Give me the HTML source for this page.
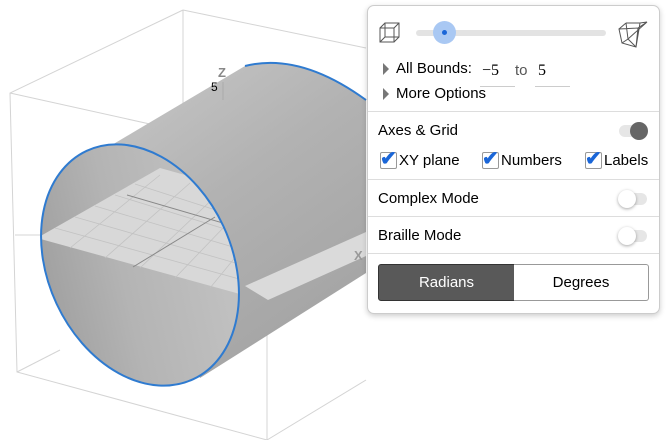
<!DOCTYPE html>
<html><head><style>
body{margin:0;width:666px;height:440px;overflow:hidden;background:#fff;font-family:"Liberation Sans",Arial,sans-serif;position:relative}
.p{position:absolute;left:367px;top:5px;width:291px;height:307px;background:#fff;border:1px solid #ccc;border-radius:7px;box-shadow:0 2px 6px rgba(0,0,0,.2)}
.t{position:absolute;font-size:15px;color:#000;white-space:nowrap}
.hr{position:absolute;left:0;right:0;height:1px;background:#ddd}
.tri{position:absolute;width:0;height:0;border-left:6px solid #777;border-top:6px solid transparent;border-bottom:6px solid transparent}
.tg{position:absolute;width:28px;height:12px;border-radius:6px;background:#e6e6e6}
.kn{position:absolute;top:-3px;width:18px;height:18px;border-radius:50%}
.cb{position:absolute;width:15px;height:15px;border:1px solid #999;border-radius:2px;background:#fff}
</style></head><body>
<svg width="666" height="440" style="position:absolute;left:0;top:0">
<defs>
<linearGradient id="g" x1="0" y1="0" x2="0.6" y2="1"><stop offset="0" stop-color="#c8c8c8"/><stop offset="0.5" stop-color="#b2b2b2"/><stop offset="1" stop-color="#a4a4a4"/></linearGradient>
<linearGradient id="gi" x1="0" y1="0" x2="1" y2="0.3"><stop offset="0" stop-color="#9c9c9c"/><stop offset="0.5" stop-color="#b4b4b4"/><stop offset="1" stop-color="#c0c0c0"/></linearGradient>
<clipPath id="fe"><ellipse cx="140" cy="265" rx="92" ry="126" transform="rotate(-25 140 265)"/></clipPath>
</defs>
<g stroke="#d4d4d4" stroke-width="1" fill="none">
<path d="M183 10 L10 93 L17 372 L267 440 M183 10 L183 110 M183 10 L366 48 M10 93 L267 150 L366 108 M267 150 L267 440 M15 235 L40 235 M17 372 L60 350 M267 440 L366 380"/>
</g>
<path d="M100 152 L245 66 Q300 52 366 100 L366 273 L200 378 Z" fill="url(#g)"/>
<path d="M245 66 Q300 52 366 100" fill="none" stroke="#2f7bd0" stroke-width="2"/>
<path d="M245 286 L366 232 L366 256 L268 300 Z" fill="#dadada"/>
<ellipse cx="140" cy="265" rx="92" ry="126" transform="rotate(-25 140 265)" fill="url(#gi)"/>
<g clip-path="url(#fe)">
<path d="M37 238 L160 168 L400 235 L240 294 Z" fill="#d8d8d8"/>
<g stroke="#c2c2c2" stroke-width="0.8"><path d="M55 228 L250 282 M75 217 L260 270 M95 206 L270 258 M115 195 L280 246 M135 184 L290 234 M70 248 L160 175 M105 258 L190 183 M140 268 L220 192 M175 278 L250 200 M210 288 L270 215"/></g>
<path d="M133 267 L215 217 M127 195 L240 228" stroke="#888" stroke-width="1"/>
</g>
<ellipse cx="140" cy="265" rx="92" ry="126" transform="rotate(-25 140 265)" fill="none" stroke="#2f7bd0" stroke-width="2"/>
<path d="M223 82 L223 100" stroke="#aaa" stroke-width="1"/>
<text x="218" y="77" font-size="13" font-weight="bold" fill="#888" font-family="Liberation Sans">Z</text>
<text x="211" y="91" font-size="12" fill="#000" font-family="Liberation Sans">5</text>
<text x="354" y="260" font-size="13" font-weight="bold" fill="#999" font-family="Liberation Sans">X</text>
</svg>
<div class="p">
<svg style="position:absolute;left:10px;top:15px" width="24" height="24" viewBox="0 0 24 24" fill="none" stroke="#555" stroke-width="1"><path d="M2 7 L16 7 L16 21 L2 21 Z M7 2 L21 2 L21 16 L7 16 Z M2 7 L7 2 M16 7 L21 2 M16 21 L21 16 M2 21 L7 16"/></svg>
<div style="position:absolute;left:48px;top:24px;width:190px;height:6px;border-radius:3px;background:#e3e3e3"></div>
<div style="position:absolute;left:65px;top:15px;width:23px;height:23px;border-radius:50%;background:#a9c8f3"></div>
<div style="position:absolute;left:74px;top:24px;width:5px;height:5px;border-radius:50%;background:#1a66d8"></div>
<svg style="position:absolute;left:250px;top:13px" width="30" height="30" viewBox="0 0 30 30" fill="none" stroke="#555" stroke-width="1"><path d="M1 10 L20 9 L18 28 L4 24 Z M8 4 L22 4 L29 3 L20 9 M1 10 L8 4 M8 4 L10 20 L4 24 M10 20 L18 28 M10 20 L29 3 M22 4 L18 28"/></svg>
<div class="tri" style="left:15px;top:57px"></div><div class="t" style="left:28px;top:54px">All Bounds:</div>
<div class="t" style="left:114px;top:56px;font-family:'Liberation Serif',serif;font-size:16px">−5</div>
<div style="position:absolute;left:112px;top:80px;width:35px;height:1px;background:#ccc"></div>
<div class="t" style="left:147px;top:56px;color:#555">to</div>
<div class="t" style="left:170px;top:56px;font-family:'Liberation Serif',serif;font-size:16px">5</div>
<div style="position:absolute;left:167px;top:80px;width:35px;height:1px;background:#ccc"></div>
<div class="tri" style="left:15px;top:82px"></div><div class="t" style="left:28px;top:79px">More Options</div>
<div class="hr" style="top:105px"></div>
<div class="t" style="left:10px;top:116px">Axes &amp; Grid</div>
<div class="tg" style="left:251px;top:119px"><div class="kn" style="left:11px;background:#666"></div></div>
<div class="cb" style="left:12px;top:146px"></div><div class="t" style="left:12px;top:140px;color:#1a66d8;font-size:20px;font-weight:bold">✔</div><div class="t" style="left:31px;top:146px">XY plane</div>
<div class="cb" style="left:114px;top:146px"></div><div class="t" style="left:114px;top:140px;color:#1a66d8;font-size:20px;font-weight:bold">✔</div><div class="t" style="left:133px;top:146px">Numbers</div>
<div class="cb" style="left:217px;top:146px"></div><div class="t" style="left:217px;top:140px;color:#1a66d8;font-size:20px;font-weight:bold">✔</div><div class="t" style="left:236px;top:146px">Labels</div>
<div class="hr" style="top:173px"></div>
<div class="t" style="left:10px;top:184px">Complex Mode</div>
<div class="tg" style="left:251px;top:187px"><div class="kn" style="left:-1px;background:#fff;box-shadow:0 1px 3px rgba(0,0,0,.35)"></div></div>
<div class="hr" style="top:210px"></div>
<div class="t" style="left:10px;top:221px">Braille Mode</div>
<div class="tg" style="left:251px;top:224px"><div class="kn" style="left:-1px;background:#fff;box-shadow:0 1px 3px rgba(0,0,0,.35)"></div></div>
<div class="hr" style="top:247px"></div>
<div style="position:absolute;left:10px;top:258px;width:135px;height:35px;background:#595959;border:1px solid #333;border-radius:3px 0 0 3px;color:#fff;font-size:15px;text-align:center;line-height:35px">Radians</div>
<div style="position:absolute;left:146px;top:258px;width:134px;height:35px;background:#fff;border:1px solid #999;border-left:none;border-radius:0 3px 3px 0;font-size:15px;text-align:center;line-height:35px">Degrees</div>
</div>
</body></html>
